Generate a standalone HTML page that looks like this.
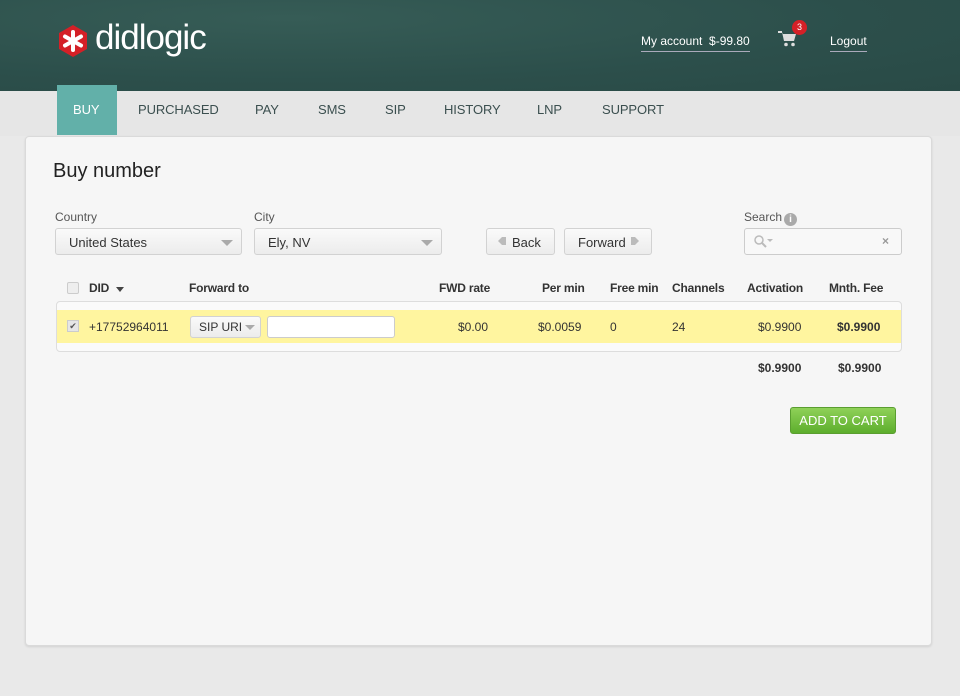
<!DOCTYPE html>
<html><head><meta charset="utf-8"><style>
*{margin:0;padding:0;box-sizing:border-box}
body{width:960px;height:696px;background:#e9e9e9;font-family:"Liberation Sans",sans-serif;position:relative;overflow:hidden;color:#333}
.a{position:absolute}
#hdr{left:0;top:0;width:960px;height:91px;background:radial-gradient(ellipse at 30% 20%,#365c56,#2c4f4b 60%,#294a46)}
.nav{top:102px;font-size:13px;color:#3b4f4f;letter-spacing:-.1px}
#panel{left:25px;top:136px;width:907px;height:510px;background:#f6f6f6;border:1px solid #dadada;border-radius:4px;box-shadow:0 1px 2px rgba(0,0,0,.1)}
.lbl{font-size:12px;color:#555}
.sel{height:27px;border:1px solid #d2d2d2;border-radius:3px;background:linear-gradient(#fafafa,#ececec);font-size:13px;color:#333;padding:6px 13px}
.tri{position:absolute;right:8px;top:11px;width:0;height:0;border-left:6px solid transparent;border-right:6px solid transparent;border-top:6px solid #aaa}
.th{top:281px;font-size:12px;font-weight:bold;color:#333;letter-spacing:-.2px}
.td{top:320px;font-size:12px;color:#333}
</style></head><body>
<div id="hdr" class="a"></div>
<svg class="a" style="left:56px;top:24px" width="34" height="34" viewBox="0 0 34 34"><polygon points="17,1 31,9 31,25 17,33 3,25 3,9" fill="#d42027"/><g stroke="#fff" stroke-width="4" stroke-linecap="round"><line x1="17" y1="8" x2="17" y2="26"/><line x1="9" y1="12.5" x2="25" y2="21.5"/><line x1="9" y1="21.5" x2="25" y2="12.5"/></g></svg>
<div class="a" style="left:95px;top:18px;font-size:35px;color:#fff;letter-spacing:-1px">didlogic</div>
<div class="a" style="left:641px;top:34px;font-size:12px;color:#fff;border-bottom:1px solid #aab;padding-bottom:3px">My account&nbsp; $-99.80</div>
<svg class="a" style="left:778px;top:31px" width="20" height="16" viewBox="0 0 20 16"><path d="M4 1l2 9h10l2-7H5z" fill="#ddd"/><circle cx="8" cy="13.5" r="1.8" fill="#ddd"/><circle cx="15" cy="13.5" r="1.8" fill="#ddd"/><rect x="0" y="0" width="4" height="2" fill="#ddd"/></svg>
<div class="a" style="left:792px;top:20px;width:15px;height:15px;border-radius:50%;background:#d42027;color:#fff;font-size:9px;text-align:center;line-height:15px">3</div>
<div class="a" style="left:830px;top:34px;font-size:12px;color:#fff;border-bottom:1px solid #aab;padding-bottom:3px">Logout</div>
<div class="a" style="left:0;top:91px;width:960px;height:45px;background:#e6e6e6"></div>
<div class="a" style="left:57px;top:85px;width:60px;height:50px;background:#62b0a9"></div>
<div class="a nav" style="left:73px;color:#fff">BUY</div>
<div class="a nav" style="left:138px">PURCHASED</div>
<div class="a nav" style="left:255px">PAY</div>
<div class="a nav" style="left:318px">SMS</div>
<div class="a nav" style="left:385px">SIP</div>
<div class="a nav" style="left:444px">HISTORY</div>
<div class="a nav" style="left:537px">LNP</div>
<div class="a nav" style="left:602px">SUPPORT</div>
<div id="panel" class="a"></div>
<div class="a" style="left:53px;top:160px;font-size:20px;color:#222">Buy number</div>
<div class="a lbl" style="left:55px;top:210px">Country</div>
<div class="a sel" style="left:55px;top:228px;width:187px">United States<span class="tri"></span></div>
<div class="a lbl" style="left:254px;top:210px">City</div>
<div class="a sel" style="left:254px;top:228px;width:188px">Ely, NV<span class="tri"></span></div>
<div class="a sel" style="left:486px;top:228px;width:69px;padding-left:25px">Back</div>
<div class="a" style="left:498px;top:237px;width:8px;height:8px;background:#bbb;clip-path:polygon(0 50%,50% 0,100% 0,100% 100%,50% 100%)"></div>
<div class="a sel" style="left:564px;top:228px;width:88px">Forward</div>
<div class="a" style="left:631px;top:237px;width:8px;height:8px;background:#bbb;clip-path:polygon(0 0,50% 0,100% 50%,50% 100%,0 100%)"></div>
<div class="a lbl" style="left:744px;top:210px">Search</div>
<div class="a" style="left:784px;top:213px;width:13px;height:13px;border-radius:50%;background:#aaa;color:#fff;font-size:10px;font-weight:bold;text-align:center;line-height:13px">i</div>
<div class="a" style="left:744px;top:228px;width:158px;height:27px;border:1px solid #ccc;border-radius:3px;background:#f8f8f8"></div>
<svg class="a" style="left:753px;top:234px" width="22" height="14"><circle cx="6" cy="6" r="4" fill="none" stroke="#bbb" stroke-width="1.5"/><line x1="9" y1="9" x2="13" y2="13" stroke="#bbb" stroke-width="2"/><path d="M14 5h6l-3 3z" fill="#bbb"/></svg>
<div class="a" style="left:882px;top:234px;font-size:12px;color:#999;font-weight:bold">×</div>
<div class="a" style="left:67px;top:282px;width:12px;height:12px;border:1px solid #ccc;background:#eee;border-radius:2px"></div>
<div class="a th" style="left:89px">DID</div>
<div class="a" style="left:116px;top:287px;border-left:4px solid transparent;border-right:4px solid transparent;border-top:5px solid #444"></div>
<div class="a th" style="left:189px">Forward to</div>
<div class="a th" style="left:439px">FWD rate</div>
<div class="a th" style="left:542px">Per min</div>
<div class="a th" style="left:610px">Free min</div>
<div class="a th" style="left:672px">Channels</div>
<div class="a th" style="left:747px">Activation</div>
<div class="a th" style="left:829px">Mnth. Fee</div>
<div class="a" style="left:56px;top:301px;width:846px;height:51px;border:1px solid #ddd;border-radius:4px;background:#fafafa"></div>
<div class="a" style="left:57px;top:310px;width:844px;height:33px;background:#fff59f"></div>
<div class="a" style="left:67px;top:320px;width:12px;height:12px;border:1px solid #ccc;background:#e6e6e6;font-size:9px;line-height:10px;text-align:center;color:#555">✔</div>
<div class="a td" style="left:89px">+17752964011</div>
<div class="a sel" style="left:190px;top:316px;width:71px;height:22px;padding:3px 8px;font-size:12px">SIP URI<span class="tri" style="top:8px;right:5px;border-width:5px 5px 0"></span></div>
<div class="a" style="left:267px;top:316px;width:128px;height:22px;border:1px solid #ccc;border-radius:3px;background:#fff"></div>
<div class="a td" style="left:458px">$0.00</div>
<div class="a td" style="left:538px">$0.0059</div>
<div class="a td" style="left:610px">0</div>
<div class="a td" style="left:672px">24</div>
<div class="a td" style="left:758px">$0.9900</div>
<div class="a td" style="left:837px;font-weight:bold">$0.9900</div>
<div class="a td" style="left:758px;top:361px;font-weight:bold">$0.9900</div>
<div class="a td" style="left:838px;top:361px;font-weight:bold">$0.9900</div>
<div class="a" style="left:790px;top:407px;width:106px;height:27px;border-radius:3px;background:linear-gradient(#8fd158,#5dae2d);border:1px solid #5a9e30;color:#fff;font-size:13px;text-align:center;line-height:25px">ADD TO CART</div>
</body></html>
